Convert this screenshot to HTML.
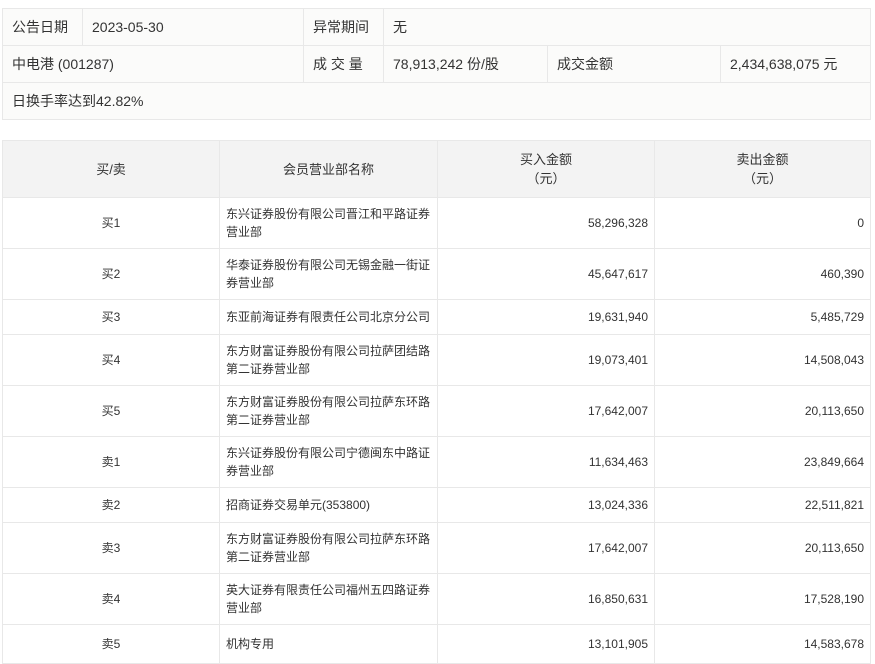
<!DOCTYPE html>
<html><head><meta charset="utf-8"><style>
body{margin:0;background:#fff;font-family:"Liberation Sans","Noto Sans CJK SC",sans-serif;color:#333;}
.c{position:absolute;box-sizing:border-box;border:1px solid #e8e8e8;display:flex;align-items:center;}
.t{background:#fbfbfa;font-size:14px;padding-left:9px;}
.h{background:#f3f3f3;font-size:13px;justify-content:center;text-align:center;line-height:19px;}
.b{font-size:12px;line-height:18px;}
.ctr{justify-content:center;}
.l{padding-left:6px;padding-right:6px;}
.r{justify-content:flex-end;padding-right:6px;}
</style></head><body>
<div class="c t" style="left:2px;top:8px;width:81px;height:38px">公告日期</div>
<div class="c t" style="left:82px;top:8px;width:222px;height:38px">2023-05-30</div>
<div class="c t" style="left:303px;top:8px;width:81px;height:38px">异常期间</div>
<div class="c t" style="left:383px;top:8px;width:488px;height:38px">无</div>
<div class="c t" style="left:2px;top:45px;width:302px;height:38px">中电港 (001287)</div>
<div class="c t" style="left:303px;top:45px;width:81px;height:38px">成 交 量</div>
<div class="c t" style="left:383px;top:45px;width:165px;height:38px">78,913,242 份/股</div>
<div class="c t" style="left:547px;top:45px;width:174px;height:38px">成交金额</div>
<div class="c t" style="left:720px;top:45px;width:151px;height:38px">2,434,638,075 元</div>
<div class="c t" style="left:2px;top:82px;width:869px;height:38px">日换手率达到42.82%</div>

<div class="c h" style="left:2px;top:140px;width:218px;height:58px">买/卖</div>
<div class="c h" style="left:219px;top:140px;width:219px;height:58px">会员营业部名称</div>
<div class="c h" style="left:437px;top:140px;width:218px;height:58px">买入金额<br>（元）</div>
<div class="c h" style="left:654px;top:140px;width:217px;height:58px">卖出金额<br>（元）</div>

<div id="rows"></div>
<script>
var d=[["买1","东兴证券股份有限公司晋江和平路证券营业部","58,296,328","0",197,52],
["买2","华泰证券股份有限公司无锡金融一街证券营业部","45,647,617","460,390",248,52],
["买3","东亚前海证券有限责任公司北京分公司","19,631,940","5,485,729",299,36],
["买4","东方财富证券股份有限公司拉萨团结路第二证券营业部","19,073,401","14,508,043",334,52],
["买5","东方财富证券股份有限公司拉萨东环路第二证券营业部","17,642,007","20,113,650",385,52],
["卖1","东兴证券股份有限公司宁德闽东中路证券营业部","11,634,463","23,849,664",436,52],
["卖2","招商证券交易单元(353800)","13,024,336","22,511,821",487,36],
["卖3","东方财富证券股份有限公司拉萨东环路第二证券营业部","17,642,007","20,113,650",522,52],
["卖4","英大证券有限责任公司福州五四路证券营业部","16,850,631","17,528,190",573,52],
["卖5","机构专用","13,101,905","14,583,678",624,40]];
var h="";d.forEach(function(r){var t="top:"+r[4]+"px;height:"+r[5]+"px;";
h+='<div class="c b ctr" style="left:2px;width:218px;'+t+'">'+r[0]+'</div>';
h+='<div class="c b l" style="left:219px;width:219px;'+t+'">'+r[1]+'</div>';
h+='<div class="c b r" style="left:437px;width:218px;'+t+'">'+r[2]+'</div>';
h+='<div class="c b r" style="left:654px;width:217px;'+t+'">'+r[3]+'</div>';});
document.getElementById("rows").innerHTML=h;
</script>
</body></html>
